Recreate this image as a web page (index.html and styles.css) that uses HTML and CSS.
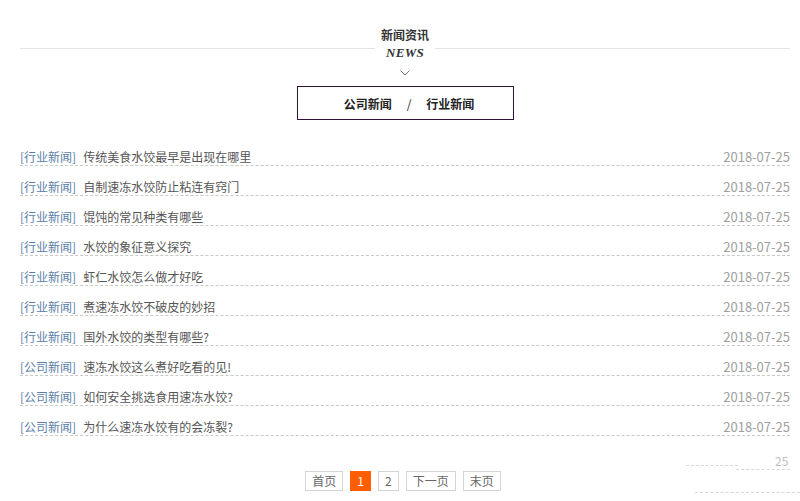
FILE: index.html
```html
<!DOCTYPE html>
<html lang="zh-CN">
<head>
<meta charset="utf-8">
<title>新闻资讯</title>
<link rel="stylesheet" href="styles.css">
</head>
<body>
<div class="wrap">
  <div class="head">
    <h2 class="title">新闻资讯</h2>
    <div class="rule">
      <span class="line"></span>
      <span class="en">NEWS</span>
      <span class="line"></span>
    </div>
    <svg class="chev" width="10" height="6" viewBox="0 0 10 6"><polyline points="0.5,0.5 5,5 9.5,0.5" fill="none" stroke="#777" stroke-width="1"/></svg>
    <div class="tabs"><span>公司新闻</span><span class="sep">/</span><span>行业新闻</span></div>
  </div>
  <ul class="list">
    <li><span class="cat">[行业新闻]</span><span class="t">传统美食水饺最早是出现在哪里</span><span class="d">2018-07-25</span></li>
    <li><span class="cat">[行业新闻]</span><span class="t">自制速冻水饺防止粘连有窍门</span><span class="d">2018-07-25</span></li>
    <li><span class="cat">[行业新闻]</span><span class="t">馄饨的常见种类有哪些</span><span class="d">2018-07-25</span></li>
    <li><span class="cat">[行业新闻]</span><span class="t">水饺的象征意义探究</span><span class="d">2018-07-25</span></li>
    <li><span class="cat">[行业新闻]</span><span class="t">虾仁水饺怎么做才好吃</span><span class="d">2018-07-25</span></li>
    <li><span class="cat">[行业新闻]</span><span class="t">煮速冻水饺不破皮的妙招</span><span class="d">2018-07-25</span></li>
    <li><span class="cat">[行业新闻]</span><span class="t">国外水饺的类型有哪些?</span><span class="d">2018-07-25</span></li>
    <li><span class="cat">[公司新闻]</span><span class="t">速冻水饺这么煮好吃看的见!</span><span class="d">2018-07-25</span></li>
    <li><span class="cat">[公司新闻]</span><span class="t">如何安全挑选食用速冻水饺?</span><span class="d">2018-07-25</span></li>
    <li><span class="cat">[公司新闻]</span><span class="t">为什么速冻水饺有的会冻裂?</span><span class="d">2018-07-25</span></li>
  </ul>
  <div class="pager">
    <a class="pg">首页</a>
    <a class="pg on">1</a>
    <a class="pg">2</a>
    <a class="pg">下一页</a>
    <a class="pg">末页</a>
  </div>
</div>
<div class="ghost">
  <span class="g g1"></span>
  <span class="g g2"></span>
  <span class="gnum">25</span>
  <span class="g g3"></span>
</div>
</body>
</html>
```
FILE: styles.css
```css
* { box-sizing: border-box; }
html, body { margin: 0; padding: 0; background: #fff; }
body {
  font-family: "Microsoft YaHei", "Noto Sans CJK SC", "Noto Sans", sans-serif;
  font-size: 12px;
  color: #555;
  height: 501px;
  overflow: hidden;
  position: relative;
}
.wrap { padding: 27px 10px 0 20px; }
.head { display: flex; flex-direction: column; align-items: center; }
.title {
  margin: 0;
  font-size: 12px;
  line-height: 16px;
  font-weight: bold;
  color: #333;
}
.rule {
  display: flex;
  width: 100%;
  align-items: flex-start;
  margin-top: 4px;
  height: 16px;
}
.rule .line { flex: 1; height: 1px; background: #e3e3e3; margin-top: 1px; }
.rule .en {
  font-family: "Liberation Serif", "Times New Roman", serif;
  font-style: italic;
  font-weight: bold;
  font-size: 13px;
  line-height: 12px;
  color: #333;
  padding: 0 11px;
  letter-spacing: 0.3px;
}
.chev { display: block; margin-top: 7px; }
.tabs {
  margin-top: 10px;
  width: 217px;
  height: 34px;
  border: 1px solid #2f1339;
  display: flex;
  justify-content: center;
  align-items: center;
  font-weight: bold;
  color: #222;
  padding-left: 8px;
}
.tabs .sep { margin: 0 15px; font-weight: normal; }
.list { list-style: none; margin: 16px 0 0; padding: 0; }
.list li {
  display: flex;
  height: 30px;
  padding-top: 14px;
  line-height: 14px;
  border-bottom: 1px dashed #c8c8c8;
}
.cat { color: #5a7ea8; margin-right: 7px; }
.t { flex: 1; color: #555; }
.d { color: #a0a0a0; font-size: 13px; }
.pager {
  display: flex;
  justify-content: center;
  gap: 7px;
  margin-top: 35px;
  padding-right: 4px;
}
.pg {
  display: block;
  height: 20px;
  line-height: 18px;
  border: 1px solid #d4d4d4;
  padding: 0 6px;
  color: #666;
  font-size: 12px;
}
.pg.on { background: #ff5e00; border-color: #ff5e00; color: #fff; }
.ghost { position: absolute; left: 0; top: 0; width: 800px; height: 501px; pointer-events: none; }
.g { position: absolute; height: 0; border-top: 1px dashed #d8d8d8; }
.g1 { left: 686px; top: 465px; width: 52px; }
.g2 { left: 736px; top: 469px; width: 54px; }
.g3 { left: 695px; top: 492px; width: 105px; }
.gnum { position: absolute; left: 775px; top: 454px; font-size: 12px; color: #c0c0c0; line-height: 14px; }
```
